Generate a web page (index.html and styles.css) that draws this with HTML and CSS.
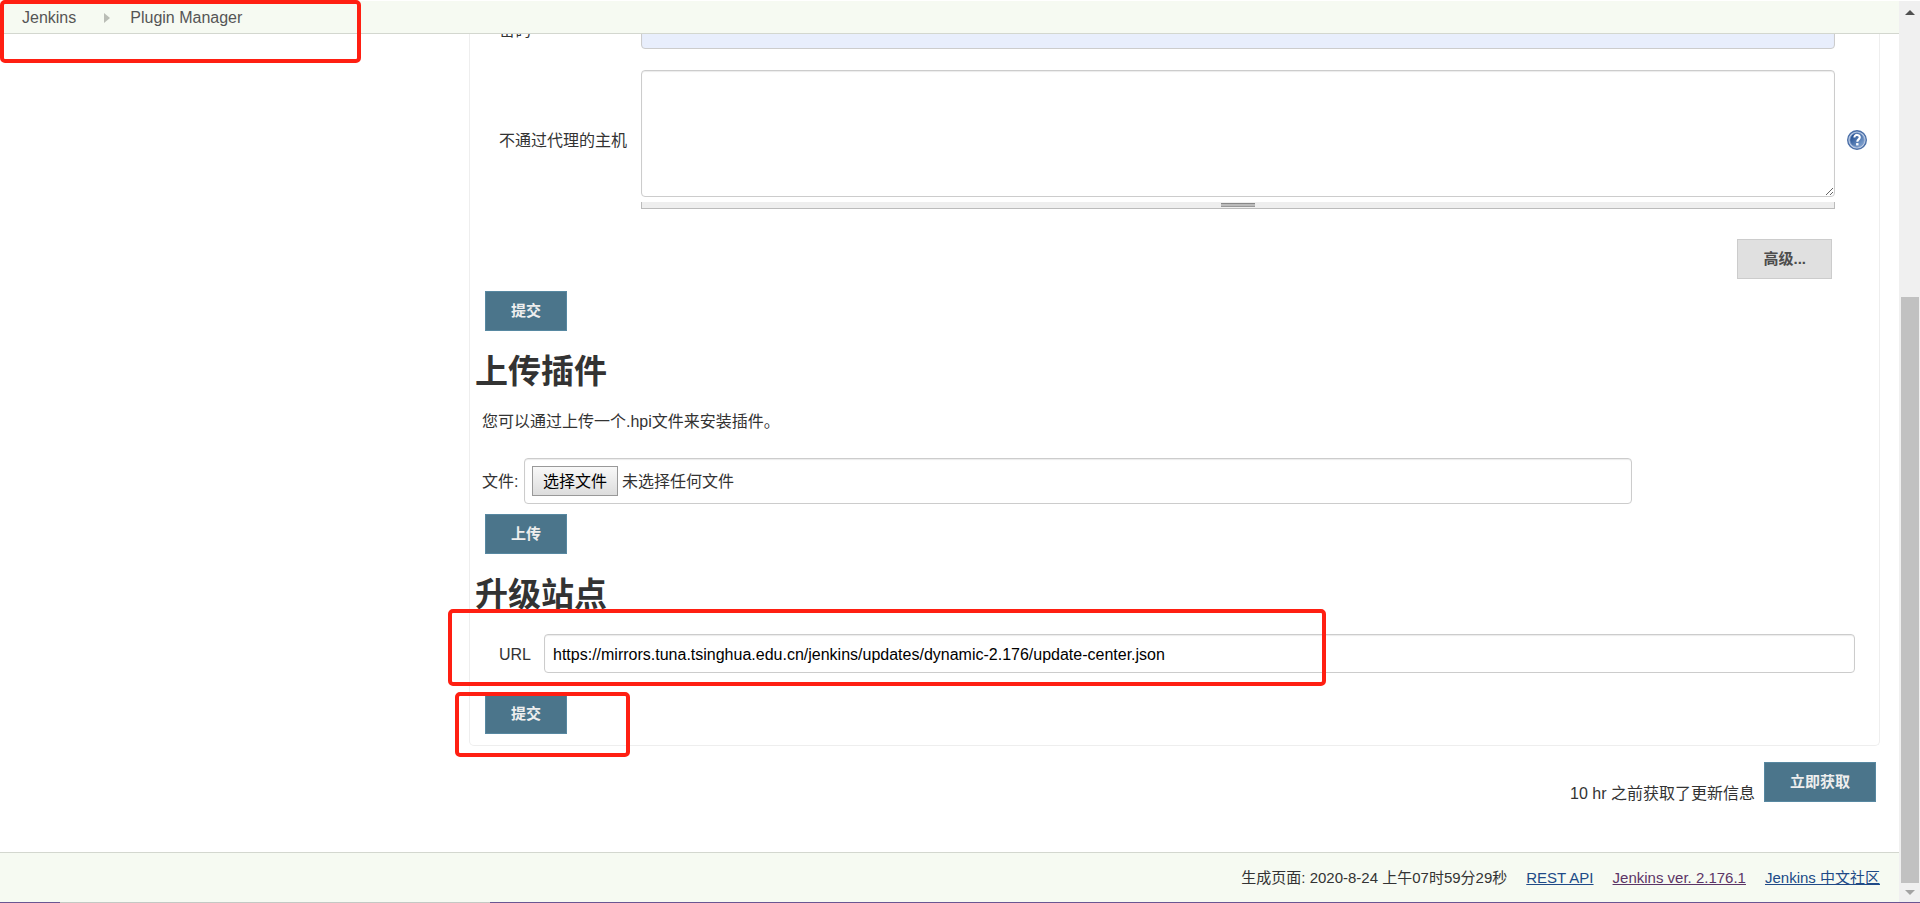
FILE: index.html
```html
<!DOCTYPE html>
<html lang="zh-CN">
<head>
    <meta charset="UTF-8">
    <meta name="viewport" content="width=device-width, initial-scale=1.0">
    <title>Plugin Manager [Jenkins]</title>
    <link rel="stylesheet" href="styles.css">
</head>
<body>
    <div class="page">
        <header class="breadcrumb-bar">
            <nav class="breadcrumbs">
                <a href="#">Jenkins</a>
                <svg class="chevron" width="6" height="10" viewBox="0 0 6 10"><path d="M0 0v10l6-5z" fill="#babdb6"/></svg>
                <a href="#">Plugin Manager</a>
            </nav>
            <div class="marker marker-breadcrumb"></div>
        </header>

        <main>
            <div class="side-panel"></div>
            <div class="main-panel">
                <div class="pane">
                    <form>
                        <div class="row row-password">
                            <label for="password">密码</label>
                            <input type="password" id="password" class="text-input autofilled">
                        </div>
                        <div class="row row-hosts">
                            <label for="no-proxy">不通过代理的主机</label>
                            <div class="textarea-wrap">
                                <textarea id="no-proxy" class="text-input"></textarea>
                                <div class="resize-handle"><span></span></div>
                            </div>
                            <a href="#" class="help" aria-label="帮助">
                                <svg width="20" height="20" viewBox="0 0 20 20">
                                    <defs>
                                        <linearGradient id="help-fill" x1="0" y1="0" x2="1" y2="1">
                                            <stop offset="0.2" stop-color="#2a5596"/>
                                            <stop offset="1" stop-color="#8fb0da"/>
                                        </linearGradient>
                                    </defs>
                                    <circle cx="10" cy="10" r="9.3" fill="#c0cfe6" stroke="#4a6fa8" stroke-width="1.4"/>
                                    <circle cx="10" cy="10" r="7.2" fill="url(#help-fill)" stroke="#7d9bc8" stroke-width="0.8"/>
                                    <path d="M7.4 7.4c0-3.4 5.6-3.2 5.4 0-.1 2-2.5 2-2.5 4.3" fill="none" stroke="#fff" stroke-width="2.1"/>
                                    <rect x="9.1" y="13.1" width="2.4" height="2.3" fill="#fff"/>
                                </svg>
                            </a>
                        </div>
                        <div class="advanced">
                            <button type="button" class="btn btn-plain">高级...</button>
                        </div>
                        <div class="actions">
                            <button type="button" class="btn">提交</button>
                        </div>
                    </form>

                    <h1>上传插件</h1>
                    <form>
                        <p class="description">您可以通过上传一个.hpi文件来安装插件。</p>
                        <div class="file-row">
                            <label for="plugin-file">文件:</label>
                            <div class="file-box">
                                <span class="file-button">选择文件</span>
                                <span class="file-name">未选择任何文件</span>
                                <input type="file" id="plugin-file">
                            </div>
                        </div>
                        <div class="actions actions-upload">
                            <button type="button" class="btn">上传</button>
                        </div>
                    </form>

                    <h1>升级站点</h1>
                    <form>
                        <div class="row row-url">
                            <label for="site-url">URL</label>
                            <input type="text" id="site-url" class="text-input" value="https://mirrors.tuna.tsinghua.edu.cn/jenkins/updates/dynamic-2.176/update-center.json">
                            <div class="marker marker-url"></div>
                        </div>
                        <div class="actions actions-site">
                            <button type="button" class="btn">提交</button>
                            <div class="marker marker-submit"></div>
                        </div>
                    </form>
                </div>
                <div class="update-info">
                    <span>10 hr 之前获取了更新信息</span>
                    <button type="button" class="btn">立即获取</button>
                </div>
            </div>
        </main>

        <footer>
            <span>生成页面: 2020-8-24 上午07时59分29秒</span>
            <a href="#">REST API</a>
            <a href="#" class="visited">Jenkins ver. 2.176.1</a>
            <a href="#">Jenkins 中文社区</a>
        </footer>
    </div>

    <div class="scrollbar">
        <svg width="10" height="5" viewBox="0 0 10 5"><path d="M0 5h10L5 0z" fill="#505050"/></svg>
        <div class="track"><div class="thumb"></div></div>
        <svg width="10" height="5" viewBox="0 0 10 5"><path d="M0 0h10L5 5z" fill="#a3a3a3"/></svg>
    </div>
    <div class="taskbar-edge"></div>
</body>
</html>
```
FILE: styles.css
```css
* {
    box-sizing: border-box;
}
body {
    margin: 0;
    min-height: 100vh;
    display: grid;
    grid-template-columns: 1fr 21px;
    grid-template-rows: 1fr 1px;
    padding-top: 1px;
    font-family: "Liberation Sans", "Noto Sans CJK SC", sans-serif;
    font-size: 16px;
    line-height: 24px;
    color: #333;
    background: #fff;
}
button, input, textarea {
    font-family: inherit;
    font-size: 16px;
}
.page {
    display: flex;
    flex-direction: column;
    min-width: 0;
}

/* breadcrumbs */
.breadcrumb-bar {
    position: relative;
    z-index: 2;
    height: 33px;
    background: #f6faf2;
    border-bottom: 1px solid #d3d7cf;
}
.breadcrumbs {
    display: flex;
    align-items: center;
    height: 32px;
    padding: 2px 0 0 22px;
}
.breadcrumbs a {
    color: #555;
    text-decoration: none;
}
.chevron {
    margin: 0 20px 0 28px;
}

main {
    flex: 1;
    display: flex;
    overflow: hidden;
    padding-right: 19px;
}
.side-panel {
    flex: 0 0 469px;
}
.main-panel {
    flex: 1;
    min-width: 0;
}
.pane {
    border: 1px solid #eee;
    border-top: none;
    border-radius: 0 0 5px 5px;
    padding-bottom: 11px;
}

/* form rows */
.row {
    position: relative;
    display: flex;
    align-items: center;
    padding: 0 44px 0 29px;
}
.row label {
    flex: 0 0 142px;
    padding-top: 2px;
}
.row-password {
    margin-top: -23px;
    margin-bottom: 21px;
}
.row-hosts {
    padding-right: 12px;
}
.text-input {
    flex: 1;
    min-width: 0;
    height: 38px;
    padding: 8px 8px 6px;
    border: 1px solid #ccc;
    border-radius: 4px;
    background: #fff;
    color: #000;
    box-shadow: inset 0 1px 1px rgba(0, 0, 0, 0.08);
}
.autofilled {
    background: #e8eefc;
}
.textarea-wrap {
    flex: 1;
    min-width: 0;
}
textarea.text-input {
    display: block;
    width: 100%;
    height: 127px;
    resize: vertical;
}
.help {
    display: block;
    height: 20px;
    margin-left: 12px;
}
.resize-handle {
    display: flex;
    justify-content: center;
    height: 7px;
    margin-top: 5px;
    padding-top: 1px;
    background: #eee;
    border: 1px solid #bbb;
    border-top: none;
}
.resize-handle span {
    width: 34px;
    height: 4px;
    background: #bbb;
    border-top: 1px solid #888;
    border-bottom: 1px solid #999;
}

/* buttons */
.btn {
    height: 40px;
    padding: 0 25px 3px;
    border: 1px solid #5788a1;
    background: #4b758b;
    color: #eee;
    font-size: 15px;
    font-weight: bold;
    cursor: pointer;
}
.btn-plain {
    background: #e0e0e0;
    border-color: #ccc;
    color: #4d4d4d;
}
.advanced {
    display: flex;
    justify-content: flex-end;
    margin-top: 30px;
    padding-right: 47px;
}
.actions {
    position: relative;
    display: flex;
    margin-top: 12px;
    padding-left: 15px;
}
.actions-upload {
    margin-top: 10px;
}
.actions-site {
    margin-top: 21px;
}

h1 {
    margin: 21px 0 0 5px;
    font-size: 33px;
    line-height: 40px;
}
.description {
    margin: 18px 0 24px 12px;
}

/* plugin upload */
.file-row {
    display: flex;
    align-items: center;
    padding-left: 12px;
}
.file-row label {
    flex: 0 0 42px;
    padding-top: 2px;
}
.file-box {
    position: relative;
    display: flex;
    align-items: center;
    gap: 4px;
    width: calc(80% - 10px);
    height: 46px;
    padding: 0 7px;
    border: 1px solid #ccc;
    border-radius: 4px;
    box-shadow: inset 0 1px 1px rgba(0, 0, 0, 0.08);
}
.file-button {
    padding: 1px 10px 0;
    border: 1px solid #999;
    background: linear-gradient(#f8f8f8, #ddd);
    color: #000;
    line-height: 27px;
}
.file-name {
    padding-top: 2px;
}
/* the real input lies over the drawn one */
.file-box input {
    position: absolute;
    inset: 0;
    width: 100%;
    opacity: 0;
}

/* update site */
.row-url {
    margin-top: 19px;
    padding-right: 24px;
}
.row-url label {
    flex-basis: 45px;
}
.row-url .text-input {
    height: 39px;
}

.update-info {
    display: flex;
    justify-content: flex-end;
    gap: 9px;
    margin-top: 16px;
    padding-right: 4px;
}
.update-info span {
    padding-top: 20px;
}

footer {
    display: flex;
    justify-content: flex-end;
    align-items: center;
    gap: 19px;
    height: 50px;
    padding-right: 19px;
    border-top: 1px solid #d3d7cf;
    background: #f6faf2;
    font-size: 15px;
}
footer a {
    color: #204a87;
}
footer a.visited {
    color: #5c3566;
}

/* red highlight frames */
.marker {
    position: absolute;
    border: 4px solid #ff1f12;
    border-radius: 5px;
    pointer-events: none;
}
.marker-breadcrumb {
    top: -1px;
    left: 0;
    width: 361px;
    height: 63px;
}
.marker-url {
    top: -25px;
    left: -22px;
    width: 878px;
    height: 77px;
}
.marker-submit {
    top: -2px;
    left: -15px;
    width: 175px;
    height: 65px;
}

/* window edges */
.scrollbar {
    display: flex;
    flex-direction: column;
    align-items: center;
    padding: 9px 0 7px;
    background: #f0f0f0;
}
.track {
    flex: 1;
    align-self: stretch;
    display: flex;
    flex-direction: column;
    justify-content: flex-end;
    margin: 6px 1px 7px 2px;
}
.thumb {
    height: 68%;
    background: #c1c1c1;
}
.taskbar-edge {
    grid-column: 1 / -1;
    background: linear-gradient(to right, #6a5692 60px, #c4c8c4 60px, #c4c8c4 490px, #6a5692 490px);
}
```
